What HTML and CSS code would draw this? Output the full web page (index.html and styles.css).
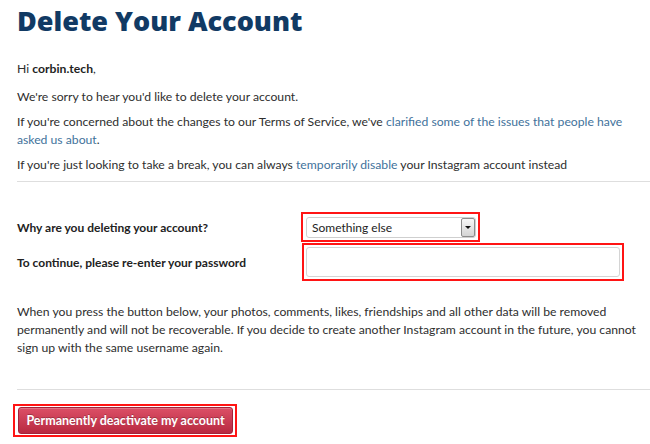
FILE: index.html
```html
<!DOCTYPE html>
<html lang="en">
<head>
<meta charset="utf-8">
<title>Delete Your Account</title>
<link rel="stylesheet" href="styles.css">
</head>
<body>
<main class="page">
  <h1 class="title">Delete Your Account</h1>
  <p class="para para-hi">Hi <strong>corbin.tech</strong>,</p>
  <p class="para">We're sorry to hear you'd like to delete your account.</p>
  <p class="para">If you're concerned about the changes to our Terms of Service, we've <a href="#" class="link">clarified some of the issues that people have asked us about</a>.</p>
  <p class="para">If you're just looking to take a break, you can always <a href="#" class="link">temporarily disable</a> your Instagram account instead</p>
  <hr class="rule">
  <form class="form">
    <div class="row row-reason">
      <label class="label">Why are you deleting your account?</label>
      <div class="mark mark-select">
        <div class="select">
          <span class="select-text">Something else</span>
          <span class="select-btn"><span class="caret"></span></span>
        </div>
      </div>
    </div>
    <div class="row row-pass">
      <label class="label">To continue, please re-enter your password</label>
      <div class="mark mark-input">
        <input class="input" type="password">
      </div>
    </div>
  </form>
  <p class="para para-warn">When you press the button below, your photos, comments, likes, friendships and all other data will be removed permanently and will not be recoverable. If you decide to create another Instagram account in the future, you cannot sign up with the same username again.</p>
  <hr class="rule rule-bottom">
  <div class="mark mark-button">
    <button class="btn" type="button">Permanently deactivate my account</button>
  </div>
</main>
</body>
</html>
```
FILE: styles.css
```css
html, body {
  margin: 0;
  padding: 0;
  background: #ffffff;
}
body {
  font-family: "Lato", "Open Sans", "Liberation Sans", sans-serif;
  color: #2e2e2e;
  font-size: 12.2px;
}
.page {
  padding-left: 17px;
  overflow: hidden;
}
.title {
  margin: 4px 0 0;
  font-family: "Open Sans", "Lato", "Liberation Sans", sans-serif;
  font-size: 27px;
  line-height: 34px;
  font-weight: 800;
  color: #113a64;
}
.para {
  margin: 0 0 7px;
  line-height: 18px;
  padding-right: 4px;
}
.para-hi {
  margin-top: 22px;
  margin-bottom: 10px;
}
.para strong {
  font-weight: 700;
  color: #1f1f1f;
}
.link {
  color: #3f729b;
  text-decoration: none;
}
.rule {
  border: 0;
  height: 1px;
  background: #dedede;
  margin: 0;
}
.form {
  margin-top: 30px;
  display: flex;
  flex-direction: column;
  gap: 1px;
}
.row {
  display: grid;
  grid-template-columns: 284px auto;
  align-items: center;
}
.label {
  font-size: 12px;
  font-weight: 700;
  color: #222;
}
.mark {
  border: 2px solid #ff1414;
  justify-self: start;
}
.mark-select {
  padding: 3px 2px 2px 3px;
}
.select {
  width: 163px;
  height: 19px;
  border: 1px solid #cfcfcf;
  border-radius: 3px;
  display: flex;
  align-items: center;
  justify-content: space-between;
  padding-left: 5px;
  box-sizing: content-box;
  background: #fff;
}
.select-text {
  font-size: 12px;
  color: #222;
}
.select-btn {
  width: 12px;
  height: 17px;
  border: 1px solid #8c8c8c;
  border-radius: 2px;
  background: linear-gradient(#f7f7f7, #d4d4d4);
  display: flex;
  align-items: center;
  justify-content: center;
}
.caret {
  width: 0;
  height: 0;
  border-left: 3px solid transparent;
  border-right: 3px solid transparent;
  border-top: 3px solid #111;
}
.row-pass .mark {
  margin-left: 1px;
}
.mark-input {
  padding: 2px 2px 2px 2px;
}
.input {
  display: block;
  width: 314px;
  height: 30px;
  box-sizing: border-box;
  border: 1px solid #d4d4d4;
  border-radius: 3px;
  margin: 0;
  padding: 0 6px;
  background: #fff;
}
.para-warn {
  margin-top: 22px;
  margin-bottom: 0;
}
.rule-bottom {
  margin-top: 32px;
}
.mark-button {
  display: inline-block;
  margin: 14px 0 0 -4px;
  padding: 1px 2px 1px 3px;
}
.btn {
  display: block;
  height: 27px;
  width: 215px;
  border: 1px solid #a3233a;
  border-radius: 3px;
  background: linear-gradient(#dc4f66, #b82a41);
  color: #fff;
  font-family: "Lato", "Open Sans", "Liberation Sans", sans-serif;
  font-weight: 700;
  font-size: 12.5px;
  text-shadow: 0 -1px 0 rgba(0, 0, 0, 0.25);
  padding: 0;
  box-shadow: inset 0 1px 0 rgba(255, 255, 255, 0.2);
}
```
